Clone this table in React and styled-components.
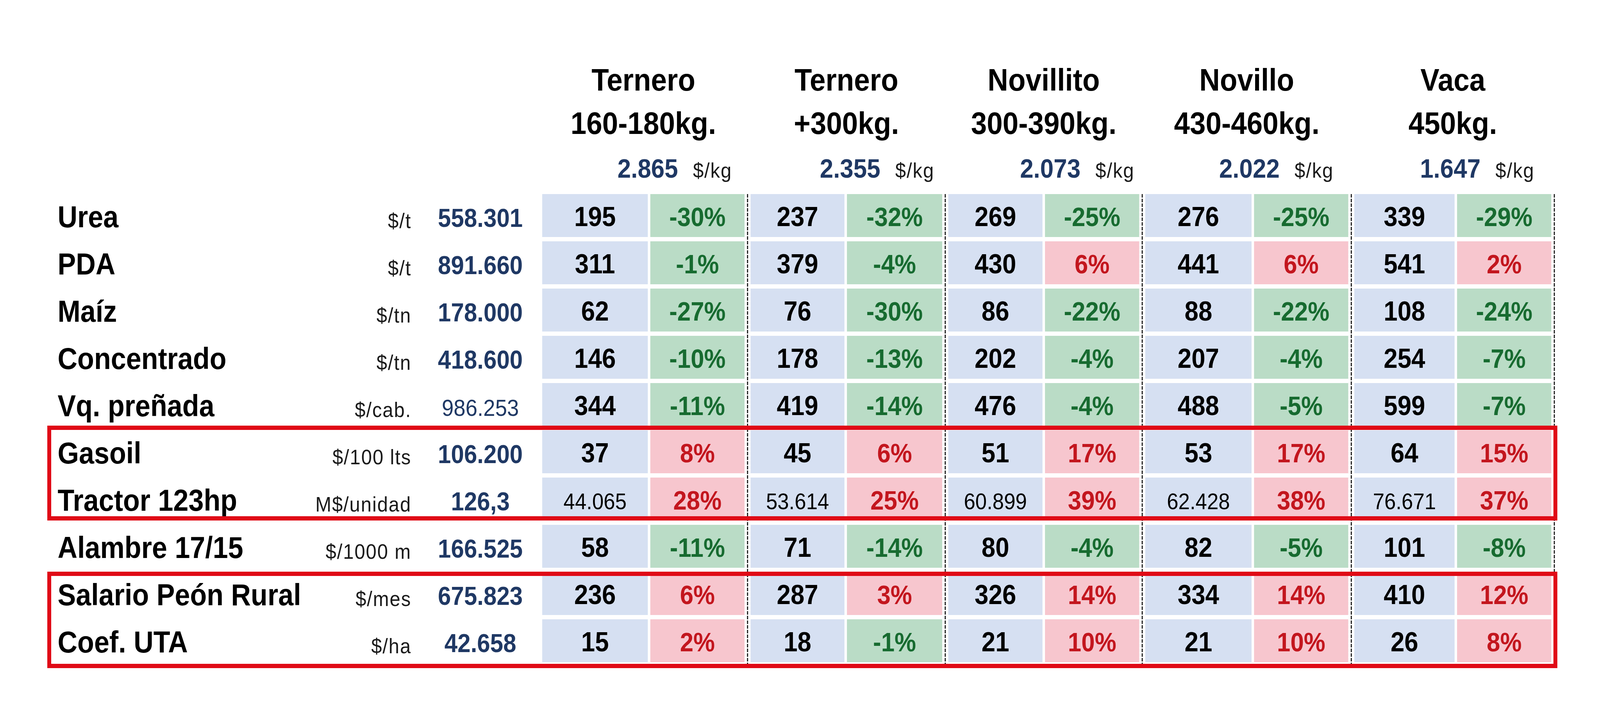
import { useEffect, useState } from 'react';
import styled, { createGlobalStyle } from 'styled-components';

const GlobalStyle = createGlobalStyle`
	html, body {
		margin: 0;
		padding: 0;
		background: #ffffff;
		overflow: hidden;
	}
	body {
		font-family: "Liberation Sans", Arial, sans-serif;
		color: #000;
	}
`;

const DESIGN_WIDTH = 4500;
const NAVY = '#1f3864';

const groups = [
	{ title: 'Ternero', weight: '160-180kg.', price: '2.865', pad: 35 },
	{ title: 'Ternero', weight: '+300kg.', price: '2.355', pad: 22 },
	{ title: 'Novillito', weight: '300-390kg.', price: '2.073', pad: 13 },
	{ title: 'Novillo', weight: '430-460kg.', price: '2.022', pad: 41 },
	{ title: 'Vaca', weight: '450kg.', price: '1.647', pad: 47 },
];

const rows = [
	{ label: 'Urea', unit: '$/t', value: '558.301', cells: [['195', '-30%'], ['237', '-32%'], ['269', '-25%'], ['276', '-25%'], ['339', '-29%']] },
	{ label: 'PDA', unit: '$/t', value: '891.660', cells: [['311', '-1%'], ['379', '-4%'], ['430', '6%'], ['441', '6%'], ['541', '2%']] },
	{ label: 'Maíz', unit: '$/tn', value: '178.000', cells: [['62', '-27%'], ['76', '-30%'], ['86', '-22%'], ['88', '-22%'], ['108', '-24%']] },
	{ label: 'Concentrado', unit: '$/tn', value: '418.600', cells: [['146', '-10%'], ['178', '-13%'], ['202', '-4%'], ['207', '-4%'], ['254', '-7%']] },
	{ label: 'Vq. preñada', unit: '$/cab.', value: '986.253', light: true, cells: [['344', '-11%'], ['419', '-14%'], ['476', '-4%'], ['488', '-5%'], ['599', '-7%']] },
	{ label: 'Gasoil', unit: '$/100 lts', value: '106.200', cells: [['37', '8%'], ['45', '6%'], ['51', '17%'], ['53', '17%'], ['64', '15%']] },
	{ label: 'Tractor 123hp', unit: 'M$/unidad', value: '126,3', small: true, cells: [['44.065', '28%'], ['53.614', '25%'], ['60.899', '39%'], ['62.428', '38%'], ['76.671', '37%']] },
	{ label: 'Alambre 17/15', unit: '$/1000 m', value: '166.525', cells: [['58', '-11%'], ['71', '-14%'], ['80', '-4%'], ['82', '-5%'], ['101', '-8%']] },
	{ label: 'Salario Peón Rural', unit: '$/mes', value: '675.823', cells: [['236', '6%'], ['287', '3%'], ['326', '14%'], ['334', '14%'], ['410', '12%']] },
	{ label: 'Coef. UTA', unit: '$/ha', value: '42.658', cells: [['15', '2%'], ['18', '-1%'], ['21', '10%'], ['21', '10%'], ['26', '8%']] },
];

// grid rows: 1 = header, data row i -> i + 2
const highlights = [
	{ from: 7, to: 9, top: -12, bottom: 0 },
	{ from: 10, to: 12, top: -1, bottom: -15 },
];

const colours = {
	base: { bg: '#d6e0f2', fg: '#000' },
	down: { bg: '#badcc6', fg: '#176b30' },
	up: { bg: '#f7c6ce', fg: '#c3161e' },
};

const Frame = styled.div`
	width: ${DESIGN_WIDTH}px;
	height: 1849px;
	transform-origin: 0 0;
`;

const Page = styled.div`
	height: 100%;
	padding: 149px 0 0 162px;
	box-sizing: border-box;
`;

const Table = styled.div`
	display: grid;
	grid-template-columns:
		531px 477px 334px
		297px 265px 3px
		264px 268px 3px
		265px 265px 3px
		299px 265px 3px
		282px 265px 3px;
	grid-template-rows: auto repeat(10, 110px);
	column-gap: 7px;
	row-gap: 11px;
`;

const Header = styled.div`
	grid-column: ${(p) => p.$col} / span 2;
	grid-row: 1;
	display: flex;
	flex-direction: column;
	padding-bottom: 15px;
`;

const HeaderTitle = styled.div`
	font-size: 80px;
	font-weight: bold;
	line-height: 111px;
	text-align: center;
	white-space: nowrap;
`;

const PriceLine = styled.div`
	display: flex;
	justify-content: flex-end;
	align-items: baseline;
	gap: 42px;
	margin-top: 20px;
	height: 80px;
	padding-right: ${(p) => p.$pad}px;
`;

const Price = styled.span`
	font-size: 68px;
	font-weight: bold;
	color: ${NAVY};
	line-height: 80px;
`;

const UnitSmall = styled.span`
	font-size: 54px;
	letter-spacing: 2px;
	color: #1a1a1a;
`;

const Label = styled.div`
	grid-column: 1;
	grid-row: ${(p) => p.$row};
	display: flex;
	align-items: center;
	padding-top: 6px;
	font-size: 77px;
	font-weight: bold;
	white-space: nowrap;
`;

const Unit = styled.div`
	grid-column: 2;
	grid-row: ${(p) => p.$row};
	display: flex;
	align-items: center;
	justify-content: flex-end;
	padding: 25px 20px 0 0;
	font-size: 54px;
	letter-spacing: 2px;
	color: #1a1a1a;
	white-space: nowrap;
`;

const Value = styled.div`
	grid-column: 3;
	grid-row: ${(p) => p.$row};
	display: flex;
	align-items: center;
	justify-content: center;
	padding-top: ${(p) => (p.$light ? 16 : 12)}px;
	font-size: ${(p) => (p.$light ? 60 : 66)}px;
	font-weight: ${(p) => (p.$light ? 'normal' : 'bold')};
	color: ${NAVY};
`;

const Cell = styled.div`
	grid-column: ${(p) => p.$col};
	grid-row: ${(p) => p.$row};
	display: flex;
	align-items: center;
	justify-content: center;
	padding-top: ${(p) => (p.$small ? 10 : 6)}px;
	background: ${(p) => p.$bg};
	color: ${(p) => p.$fg};
	font-size: ${(p) => p.$size}px;
	font-weight: ${(p) => (p.$small ? 'normal' : 'bold')};
	white-space: nowrap;
`;

const Separator = styled.div`
	grid-column: ${(p) => p.$col};
	grid-row: 2 / -1;
	margin-bottom: -12px;
	background: repeating-linear-gradient(to bottom, #111 0 9px, #ffffff 9px 12px);
`;

const Highlight = styled.div`
	grid-column: 1 / -1;
	grid-row: ${(p) => p.$from} / ${(p) => p.$to};
	margin: ${(p) => p.$top}px -7px ${(p) => p.$bottom}px -29px;
	border: 11px solid #e00a16;
	z-index: 2;
	pointer-events: none;
`;

// the table is drawn at 4500px; squeeze it to whatever width the window really has
const useFitScale = () => {
	const read = () => (typeof window === 'undefined' ? 1 : window.innerWidth / DESIGN_WIDTH);
	const [scale, setScale] = useState(read);
	useEffect(() => {
		const onResize = () => setScale(read());
		window.addEventListener('resize', onResize);
		return () => window.removeEventListener('resize', onResize);
	}, []);
	return scale;
};

const App = () => {
	const scale = useFitScale();

	return (
		<>
			<GlobalStyle />
			<Frame style={{ transform: `scaleX(${scale})` }}>
				<Page>
					<Table>
						{groups.map((g, i) => (
							<Header key={`h${i}`} $col={4 + i * 3}>
								<HeaderTitle>{g.title}</HeaderTitle>
								<HeaderTitle>{g.weight}</HeaderTitle>
								<PriceLine $pad={g.pad}>
									<Price>{g.price}</Price>
									<UnitSmall>$/kg</UnitSmall>
								</PriceLine>
							</Header>
						))}

						{rows.map((r, ri) => {
							const row = ri + 2;
							return [
								<Label key={`l${ri}`} $row={row}>{r.label}</Label>,
								<Unit key={`u${ri}`} $row={row}>{r.unit}</Unit>,
								<Value key={`v${ri}`} $row={row} $light={r.light}>{r.value}</Value>,
								...r.cells.flatMap(([num, pct], gi) => {
									const tone = pct.startsWith('-') ? colours.down : colours.up;
									return [
										<Cell
											key={`n${ri}-${gi}`}
											$row={row}
											$col={4 + gi * 3}
											$bg={colours.base.bg}
											$fg={colours.base.fg}
											$size={r.small ? 58 : 70}
											$small={r.small}
										>
											{num}
										</Cell>,
										<Cell
											key={`p${ri}-${gi}`}
											$row={row}
											$col={5 + gi * 3}
											$bg={tone.bg}
											$fg={tone.fg}
											$size={68}
										>
											{pct}
										</Cell>,
									];
								}),
							];
						})}

						{groups.map((g, i) => (
							<Separator key={`s${i}`} $col={6 + i * 3} />
						))}

						{highlights.map((h, i) => (
							<Highlight key={`r${i}`} $from={h.from} $to={h.to} $top={h.top} $bottom={h.bottom} />
						))}
					</Table>
				</Page>
			</Frame>
		</>
	);
};

export default App;
